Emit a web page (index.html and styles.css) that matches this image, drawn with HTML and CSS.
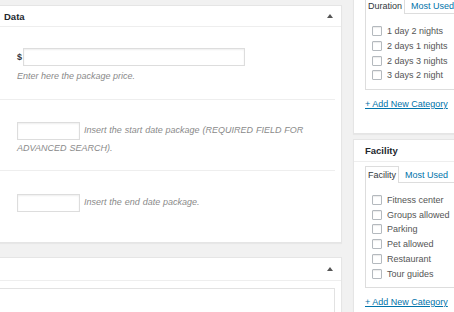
FILE: index.html
```html
<!DOCTYPE html>
<html lang="en">
<head>
<meta charset="utf-8">
<title>Package data</title>
<link rel="stylesheet" href="styles.css">
</head>
<body>
<div class="page">
  <div class="main">
    <section class="box data-box">
      <header class="box-head"><h2 class="box-title">Data</h2><span class="toggle"></span></header>
      <div class="row row-price">
        <div class="price-line"><span class="cur">$</span><input class="field price" type="text"></div>
        <p class="desc">Enter here the package price.</p>
      </div>
      <div class="row row-start">
        <p class="date-line"><input class="field date" type="text"> <span class="desc">Insert the start date package (REQUIRED FIELD FOR ADVANCED SEARCH).</span></p>
      </div>
      <div class="row row-end">
        <p class="date-line"><input class="field date" type="text"> <span class="desc">Insert the end date package.</span></p>
      </div>
    </section>
    <section class="box editor-box">
      <header class="box-head editor-head"><span class="toggle"></span></header>
      <div class="editor-body"><div class="editor-frame"></div></div>
    </section>
  </div>
  <aside class="side">
    <section class="box side-box first">
      <ul class="tabs">
        <li class="tab active">Duration</li>
        <li class="tab link">Most Used</li>
      </ul>
      <ul class="tab-panel">
        <li class="check"><span class="cb"></span>1 day 2 nights</li>
        <li class="check"><span class="cb"></span>2 days 1 nights</li>
        <li class="check"><span class="cb"></span>2 days 3 nights</li>
        <li class="check"><span class="cb"></span>3 days 2 night</li>
      </ul>
      <a class="add-new" href="#">+ Add New Category</a>
    </section>
    <section class="box side-box">
      <header class="side-head"><h2 class="box-title">Facility</h2></header>
      <div class="side-inner">
        <ul class="tabs">
          <li class="tab active">Facility</li>
          <li class="tab link">Most Used</li>
        </ul>
        <ul class="tab-panel">
          <li class="check"><span class="cb"></span>Fitness center</li>
          <li class="check"><span class="cb"></span>Groups allowed</li>
          <li class="check"><span class="cb"></span>Parking</li>
          <li class="check"><span class="cb"></span>Pet allowed</li>
          <li class="check"><span class="cb"></span>Restaurant</li>
          <li class="check"><span class="cb"></span>Tour guides</li>
        </ul>
        <a class="add-new" href="#">+ Add New Category</a>
      </div>
    </section>
  </aside>
</div>
</body>
</html>
```
FILE: styles.css
```css
* { box-sizing: border-box; }
html, body { margin: 0; padding: 0; }
body {
  background: #f1f1f1;
  font-family: "Liberation Sans", Arial, sans-serif;
  font-size: 9px;
  color: #555;
  overflow: hidden;
  width: 454px;
  height: 312px;
}
.page {
  display: flex;
  align-items: flex-start;
  gap: 11px;
}
.main {
  flex: 0 0 343px;
  margin-left: -1px;
  padding-top: 5px;
  display: flex;
  flex-direction: column;
  gap: 14px;
}
.box {
  background: #fff;
  border: 1px solid #e5e5e5;
  box-shadow: 0 1px 1px rgba(0,0,0,0.04);
}
.box-head {
  height: 21px;
  border-bottom: 1px solid #eee;
  display: flex;
  align-items: center;
  padding: 0 8px 0 4px;
}
.box-title {
  margin: 0;
  font-size: 9.5px;
  font-weight: bold;
  color: #23282d;
}
.toggle {
  margin-left: auto;
  width: 0;
  height: 0;
  border-left: 3px solid transparent;
  border-right: 3px solid transparent;
  border-bottom: 4px solid #555;
}
.row {
  margin-right: 6px;
  padding-left: 17px;
  border-bottom: 1px solid #eee;
}
.row-price { padding-top: 21px; padding-bottom: 17px; }
.row-start { padding-top: 22px; padding-bottom: 14px; }
.row-end { padding-top: 23px; padding-bottom: 30px; border-bottom: 0; }
.price-line {
  display: flex;
  align-items: center;
  height: 18px;
  gap: 1px;
}
.cur {
  color: #32373c;
  font-weight: bold;
  font-size: 9px;
  width: 5px;
}
.field {
  height: 18px;
  margin: 0;
  padding: 0 4px;
  border: 1px solid #ddd;
  box-shadow: inset 0 1px 2px rgba(0,0,0,0.07);
  background: #fff;
  font: inherit;
}
.price { width: 222px; }
.date { width: 63px; vertical-align: middle; margin-right: 1px; }
.desc {
  color: #8a8a8a;
  font-style: italic;
  font-size: 9px;
}
p.desc { margin: 5px 0 0; line-height: 11px; }
.date-line {
  margin: 0;
  line-height: 16px;
  word-spacing: 0.4px;
}
.editor-head { height: 23px; }
.editor-body {
  padding: 7px 6px 0 0;
}
.editor-frame {
  height: 40px;
  border: 1px solid #e2e2e2;
  border-left: 0;
}
.side {
  flex: 0 0 130px;
  margin-top: -10px;
  display: flex;
  flex-direction: column;
  gap: 5px;
}
.side-box.first { padding: 6px 0 23px 11px; }
.side-head {
  height: 22px;
  border-bottom: 1px solid #eee;
  display: flex;
  align-items: center;
  padding-left: 11px;
}
.side-inner {
  padding: 4px 0 23px 11px;
}
.tabs {
  list-style: none;
  margin: 0 0 -1px;
  padding: 0;
  display: flex;
  gap: 5px;
}
.tab {
  line-height: 16px;
  padding: 0 2px;
  border: 1px solid transparent;
  border-bottom: 0;
}
.tab.active {
  position: relative;
  z-index: 1;
  background: #fff;
  border-color: #ddd;
  color: #32373c;
}
.tab.link { color: #0073aa; padding: 0; }
.tab-panel {
  list-style: none;
  margin: 0;
  padding: 10px 0 6px 6px;
  border: 1px solid #ddd;
  border-right: 0;
  background: #fff;
}
.check {
  height: 14.7px;
  display: flex;
  align-items: center;
  gap: 5px;
  color: #555;
}
.cb {
  width: 10px;
  height: 10px;
  border: 1px solid #b4b9be;
  border-radius: 1px;
  background: #fff;
  box-shadow: inset 0 1px 1px rgba(0,0,0,0.08);
}
.add-new {
  display: block;
  margin-top: 9px;
  line-height: 11px;
  color: #0073aa;
  text-decoration: underline;
  font-size: 9px;
}
```
